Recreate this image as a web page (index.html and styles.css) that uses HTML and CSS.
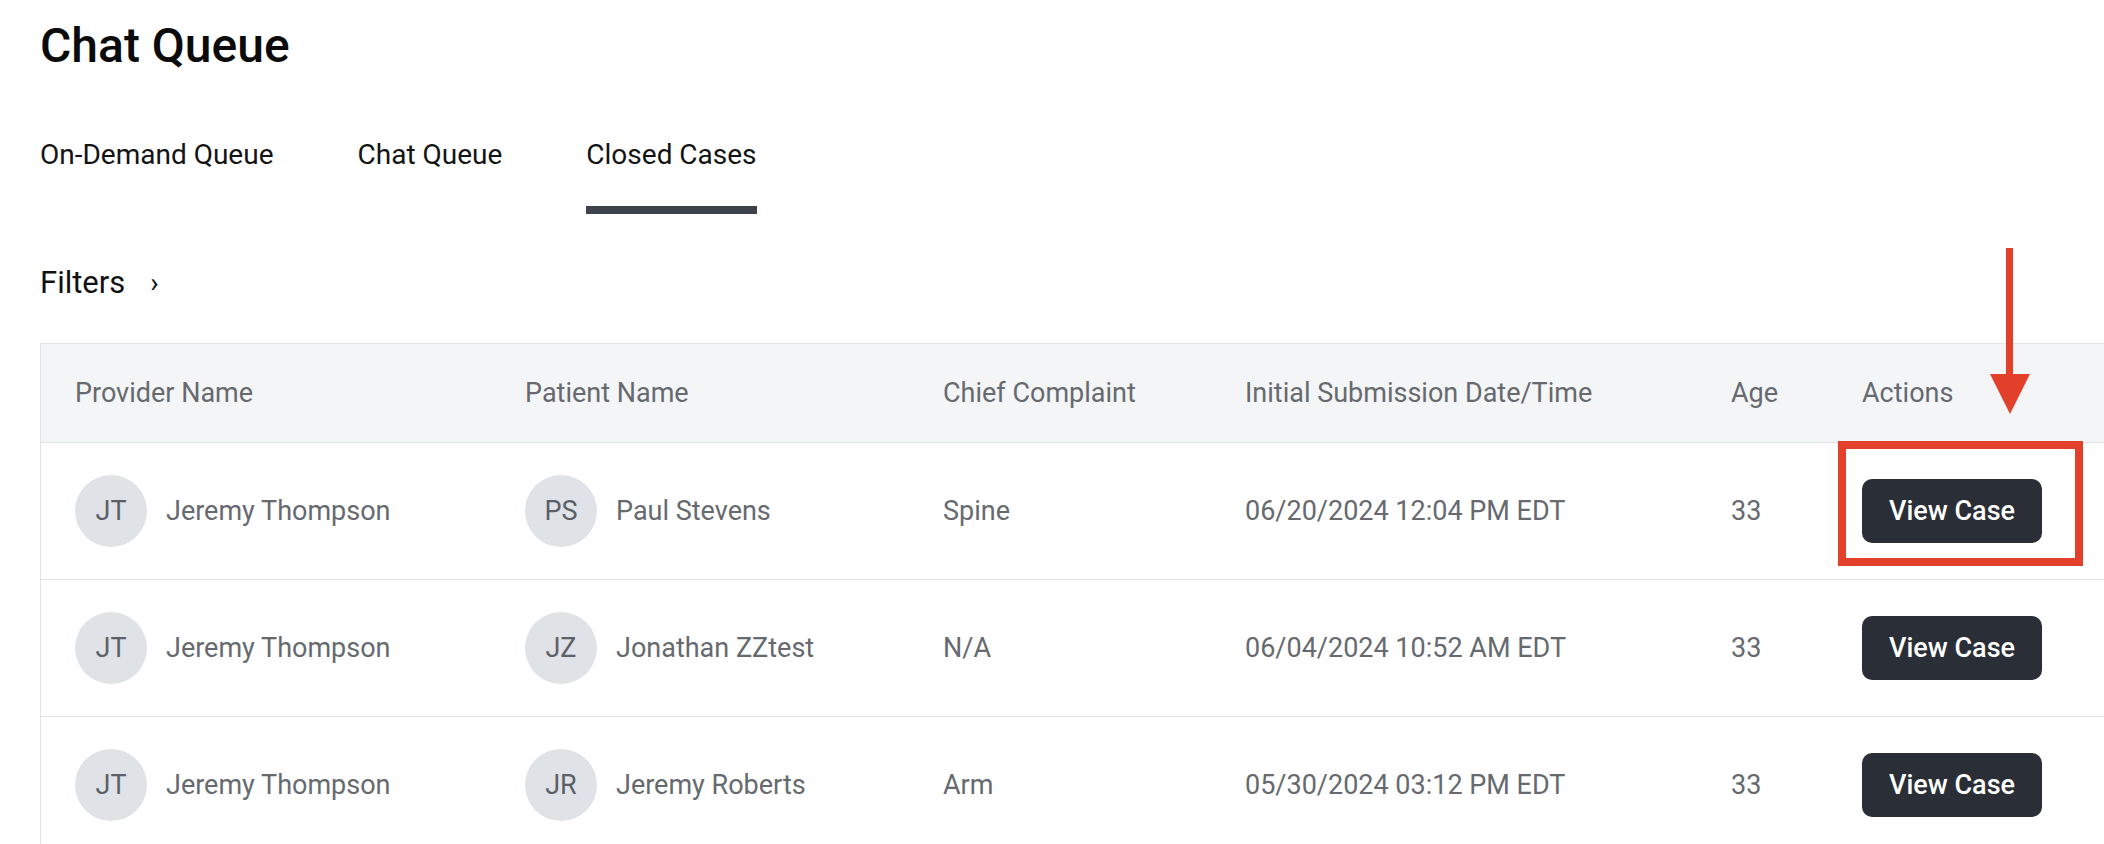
FILE: index.html
```html
<!DOCTYPE html>
<html lang="en">
<head>
    <meta charset="UTF-8">
    <meta name="viewport" content="width=device-width, initial-scale=1.0">
    <title>Chat Queue</title>
    <link rel="stylesheet" href="styles.css">
</head>
<body>
    <!-- Encabezado -->
    <h1 class="titulo">Chat Queue</h1>

    <!-- Pestañas -->
    <nav class="tabs">
        <a class="tab">On-Demand Queue</a>
        <a class="tab">Chat Queue</a>
        <a class="tab activa">Closed Cases</a>
    </nav>

    <div class="filtros">
        <span>Filters</span>
        <span class="chevron">›</span>
    </div>

    <!-- Tabla de casos cerrados -->
    <div class="tabla">
        <div class="fila cabecera">
            <div class="celda">Provider Name</div>
            <div class="celda">Patient Name</div>
            <div class="celda">Chief Complaint</div>
            <div class="celda">Initial Submission Date/Time</div>
            <div class="celda">Age</div>
            <div class="celda">Actions</div>
        </div>

        <div class="fila">
            <div class="celda persona"><span class="avatar">JT</span>Jeremy Thompson</div>
            <div class="celda persona"><span class="avatar">PS</span>Paul Stevens</div>
            <div class="celda">Spine</div>
            <div class="celda">06/20/2024 12:04 PM EDT</div>
            <div class="celda">33</div>
            <div class="celda">
                <div class="accion">
                    <button class="boton">View Case</button>
                    <span class="marca"></span>
                </div>
            </div>
        </div>

        <div class="fila">
            <div class="celda persona"><span class="avatar">JT</span>Jeremy Thompson</div>
            <div class="celda persona"><span class="avatar">JZ</span>Jonathan ZZtest</div>
            <div class="celda">N/A</div>
            <div class="celda">06/04/2024 10:52 AM EDT</div>
            <div class="celda">33</div>
            <div class="celda"><button class="boton">View Case</button></div>
        </div>

        <div class="fila">
            <div class="celda persona"><span class="avatar">JT</span>Jeremy Thompson</div>
            <div class="celda persona"><span class="avatar">JR</span>Jeremy Roberts</div>
            <div class="celda">Arm</div>
            <div class="celda">05/30/2024 03:12 PM EDT</div>
            <div class="celda">33</div>
            <div class="celda"><button class="boton">View Case</button></div>
        </div>
    </div>

    <!-- Flecha de anotación -->
    <svg class="flecha" width="46" height="166" viewBox="0 0 46 166">
        <rect x="19" y="0" width="7" height="128" fill="#e2402a"/>
        <polygon points="3,126 43,126 23,166" fill="#e2402a"/>
    </svg>
</body>
</html>
```

FILE: styles.css
```css
* {
    box-sizing: border-box;
}

body {
    margin: 0;
    padding-left: 40px;
    font-family: Roboto, "Liberation Sans", sans-serif;
    background-color: #ffffff;
    color: #111111;
    overflow: hidden;
    position: relative;
}

.titulo {
    margin: 0;
    padding-top: 18px;
    font-size: 48px;
    font-weight: 500;
    line-height: 56px;
    color: #0b0b0b;
}

.tabs {
    display: flex;
    gap: 84px;
    margin-top: 63px;
}

.tab {
    font-size: 28px;
    line-height: 36px;
    padding-bottom: 33px;
    border-bottom: 8px solid transparent;
    color: #141414;
    cursor: pointer;
}

.tab.activa {
    border-bottom-color: #3e434b;
}

.filtros {
    display: flex;
    align-items: center;
    gap: 25px;
    margin-top: 51px;
    font-size: 31px;
    line-height: 36px;
    color: #111111;
}

.chevron {
    font-size: 28px;
}

.tabla {
    margin-top: 42px;
    margin-right: -20px;
    border: 1px solid #e1e4e8;
    border-bottom: none;
}

.fila {
    display: grid;
    grid-template-columns: 450px 418px 302px 486px 131px 1fr;
    align-items: center;
    padding-left: 34px;
    height: 137px;
    border-bottom: 1px solid #e1e4e8;
    font-size: 27px;
    color: #666a6f;
}

.fila.cabecera {
    height: 99px;
    background-color: #f4f5f7;
}

.celda {
    display: flex;
    align-items: center;
}

.persona {
    gap: 19px;
}

.avatar {
    width: 72px;
    height: 72px;
    border-radius: 50%;
    background-color: #dfe3e8;
    display: flex;
    align-items: center;
    justify-content: center;
    font-size: 27px;
    color: #5c6066;
    flex-shrink: 0;
}

.accion {
    position: relative;
}

.boton {
    height: 64px;
    width: 180px;
    border: none;
    border-radius: 10px;
    background-color: #2a2e36;
    color: #ffffff;
    font-family: Roboto, "Liberation Sans", sans-serif;
    font-size: 27px;
    font-weight: 500;
    cursor: pointer;
}

/* recuadro rojo de anotación */
.marca {
    position: absolute;
    left: -24px;
    top: -38px;
    width: 245px;
    height: 125px;
    border: 8px solid #e2402a;
    pointer-events: none;
}

.flecha {
    position: absolute;
    left: 1987px;
    top: 248px;
}
```
